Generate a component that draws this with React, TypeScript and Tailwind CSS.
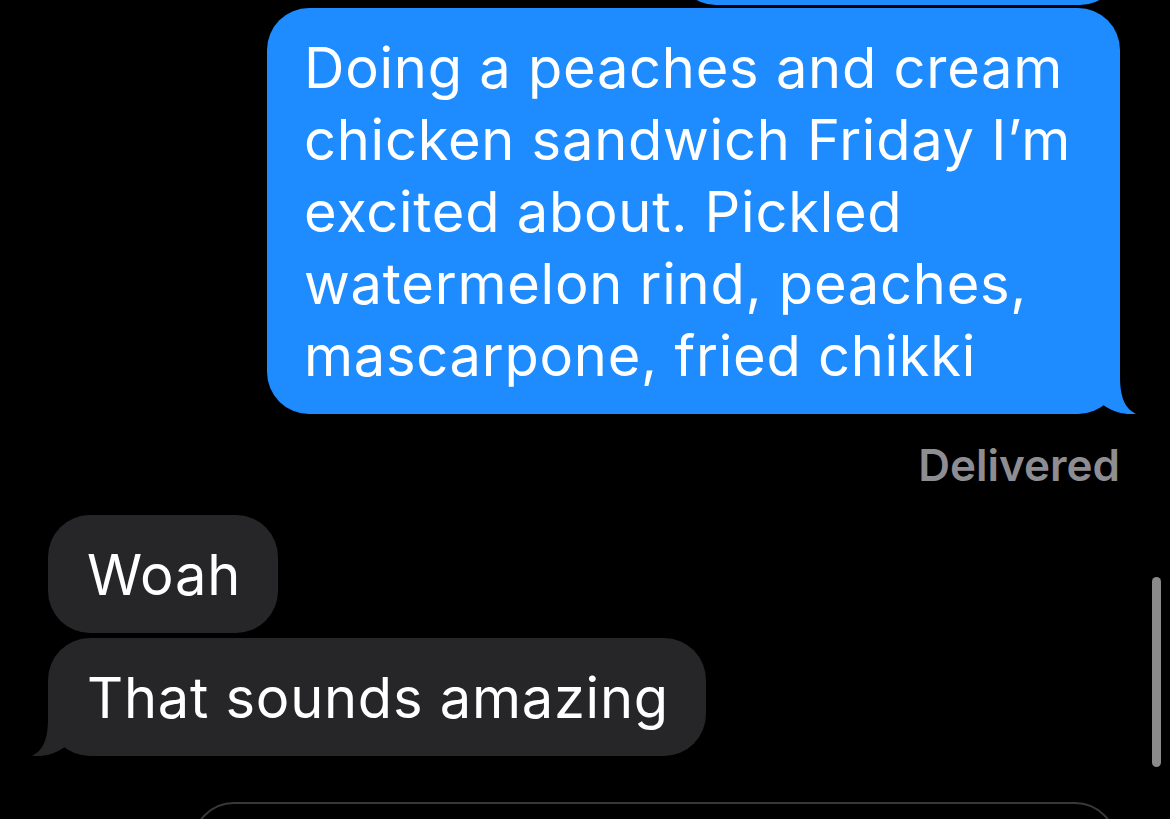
import React from "react";

const BLUE = "bg-[#1e8bff]";

function BlueTail() {
  return (
    <svg
      className="absolute right-[-17px] bottom-0"
      width="40"
      height="46"
      viewBox="0 0 40 46"
    >
      <path
        d="M4 35 L4 0 L23 0 L23 8 C23 30 28 40 39 46 C28 47 14 44 4 35 Z"
        fill="#1e8bff"
      />
    </svg>
  );
}

function GrayTail() {
  return (
    <svg
      className="absolute left-[-17px] bottom-0 -scale-x-100"
      width="40"
      height="46"
      viewBox="0 0 40 46"
    >
      <path
        d="M4 35 L4 0 L23 0 L23 8 C23 30 28 40 39 46 C28 47 14 44 4 35 Z"
        fill="#262629"
      />
    </svg>
  );
}

export default function App() {
  const lines = [
    "Doing a peaches and cream",
    "chicken sandwich Friday I\u2019m",
    "excited about. Pickled",
    "watermelon rind, peaches,",
    "mascarpone, fried chikki",
  ];
  return (
    <div
      className="relative w-[1170px] h-[819px] bg-black overflow-hidden flex flex-col text-white"
      style={{ fontFamily: "Inter, 'Noto Sans', sans-serif" }}
    >
      {/* previous sent bubble (cut off) */}
      <div className={`shrink-0 ml-[676px] w-[444px] h-[80px] mt-[-75px] rounded-[42px] ${BLUE}`} />

      {/* main sent bubble */}
      <div className="shrink-0 flex justify-end pr-[50px] mt-[3px]">
        <div
          className={`relative w-[853px] rounded-[42px] ${BLUE} pl-[37px] pt-[24px] pb-[22px] text-[56px] leading-[72px] tracking-[0.75px]`}
        >
          {lines.map((l) => (
            <div key={l} className="whitespace-nowrap">
              {l}
            </div>
          ))}
          <BlueTail />
        </div>
      </div>

      {/* delivered */}
      <div className="shrink-0 flex justify-end pr-[50px] mt-[25px]">
        <div className="text-[44px] leading-[52px] font-semibold text-[#8d8d92]">
          Delivered
        </div>
      </div>

      {/* received bubbles */}
      <div className="shrink-0 flex flex-col items-start pl-[48px] mt-[24px] gap-[5px]">
        <div className="rounded-[42px] bg-[#262629] pl-[39px] pr-[37px] pt-[24px] pb-[22px] text-[56px] leading-[72px] tracking-[0.75px] whitespace-nowrap">
          Woah
        </div>
        <div className="relative rounded-[42px] bg-[#262629] pl-[39px] pr-[37px] pt-[24px] pb-[22px] text-[56px] leading-[72px] tracking-[0.75px] whitespace-nowrap">
          That sounds amazing
          <GrayTail />
        </div>
      </div>

      {/* input field */}
      <div className="ml-[192px] mt-[46px] w-[925px] h-[90px] shrink-0 rounded-[42px] border-2 border-[#38383a]" />

      {/* scrollbar */}
      <div className="absolute left-[1152px] top-[577px] w-[9px] h-[190px] rounded-full bg-[#8a8a8a]" />
    </div>
  );
}
